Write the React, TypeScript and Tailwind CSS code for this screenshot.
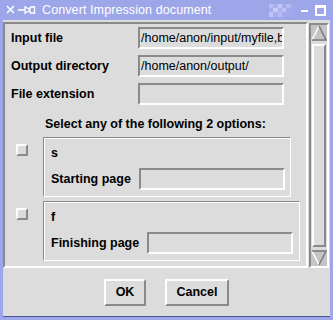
import React from 'react';

const font = { fontFamily: '"Liberation Sans", Arial, sans-serif' };

// sunken entry
const Field = ({ value, className = '' }: { value?: string; className?: string }) => (
    <div className={`h-[22px] border-2 border-t-[#8a8a8a] border-l-[#8a8a8a] border-r-white border-b-white bg-[#dcdcdc] overflow-hidden whitespace-nowrap text-[12.5px] leading-[18px] pl-[1px] text-black ${className}`}>
        {value}
    </div>
);

const Check = () => (
    <div className="w-[12px] h-[12px] shrink-0 border-2 border-t-white border-l-white border-r-[#8a8a8a] border-b-[#8a8a8a] bg-[#dcdcdc]" />
);

const Arrow = ({ down }: { down?: boolean }) => (
    <div className="h-[16px] w-full bg-[#c4c4c4] flex items-center justify-center">
        <svg width="16" height="16" viewBox="0 0 16 16">
            {down ? (
                <>
                    <path d="M1 1 L8 15" stroke="#ffffff" strokeWidth="1.5" fill="none" />
                    <path d="M8 15 L15 1 L1 1" stroke="#7a7a7a" strokeWidth="1.5" fill="none" />
                </>
            ) : (
                <>
                    <path d="M1 15 L8 1" stroke="#ffffff" strokeWidth="1.5" fill="none" />
                    <path d="M8 1 L15 15 L1 15" stroke="#7a7a7a" strokeWidth="1.5" fill="none" />
                </>
            )}
        </svg>
    </div>
);

const Option = ({ name, label, width, right }: { name: string; label: string; width: string; right: string }) => (
    <div className="flex items-start pl-[11px]">
        <div className="mt-[7px]">
            <Check />
        </div>
        <div className={`ml-[15px] h-[60px] ${width} border border-t-[#8a8a8a] border-l-[#8a8a8a] border-r-white border-b-white shadow-[inset_1px_1px_0_#ffffff] pl-[7px] ${right} pt-[7px] flex flex-col`}>
            <div className="text-[12.5px] font-bold leading-[16px] h-[16px]">{name}</div>
            <div className="flex items-center gap-[8px] mt-[7px]">
                <span className="text-[12.5px] font-bold whitespace-nowrap">{label}</span>
                <Field className="flex-1" />
            </div>
        </div>
    </div>
);

export default function App() {
    return (
        <div className="w-[333px] h-[320px] bg-[#9ea6ea] flex flex-col overflow-hidden" style={font}>
            {/* title bar */}
            <div className="h-[20px] flex items-center text-white relative">
                <svg width="40" height="20" viewBox="0 0 40 20" className="shrink-0">
                    <path d="M7 6 L14 13 M14 6 L7 13" stroke="#ffffff" strokeWidth="1.6" />
                    <path d="M18 10 L25 10" stroke="#ffffff" strokeWidth="1.6" />
                    <path d="M25 6 L25 14 M25 7 L30 9.5 L30 10.5 L25 13 M30 7 L30 13 M30 7 L35 7 M30 13 L35 13 M34.5 6 L34.5 14" stroke="#ffffff" strokeWidth="1.3" fill="none" />
                </svg>
                <span className="ml-[2px] text-[12.5px] tracking-[0.1px] leading-[20px]">Convert Impression document</span>
                <div className="ml-auto flex items-center h-full">
                    <div className="grid grid-cols-6 grid-rows-3 w-[26px] h-[13px] mr-[6px]">
                        {['#b8bef2', '#a8aeee', '#c4c8f4', '#a4abee', '#b4baf0', '#a0a8ec',
                          '#a4abee', '#c8ccf6', '#aab0ee', '#bcc2f2', '#a6acee', '#a0a8ec',
                          '#c0c6f4', '#a8aeee', '#b6bcf2', '#a4aaee', '#a2a9ec', '#a0a8ec'].map((c, i) => (
                            <div key={i} style={{ background: c }} />
                        ))}
                    </div>
                    <div className="w-[7px] h-[2px] bg-white mr-[7px] mt-[1px]" />
                    <div className="w-[11px] h-[11px] border-2 border-white border-t-[3px] mr-[7px]" />
                </div>
            </div>

            {/* window body */}
            <div className="flex-1 mx-[3px] bg-[#dcdcdc] border-b border-[#4d5494] flex flex-col mb-[3px] text-black">
                <div className="flex mt-[2px]">
                    {/* scrolled panel */}
                    <div className="w-[305px] h-[246px] border-2 border-t-[#8a8a8a] border-l-[#8a8a8a] border-r-white border-b-white overflow-hidden">
                        <div className="grid grid-cols-[127px_146px] gap-y-[6px] pl-[6px] pt-[3px] items-center">
                            <span className="text-[12.5px] font-bold">Input file</span>
                            <Field value="/home/anon/input/myfile,bak" />
                            <span className="text-[12.5px] font-bold">Output directory</span>
                            <Field value="/home/anon/output/" />
                            <span className="text-[12.5px] font-bold">File extension</span>
                            <Field />
                        </div>
                        <div className="pl-[40px] mt-[11px] text-[12.5px] font-bold leading-[16px]">
                            Select any of the following 2 options:
                        </div>
                        <div className="flex flex-col gap-[4px] mt-[5px]">
                            <Option name="s" label="Starting page" width="w-[248px]" right="pr-[5px]" />
                            <Option name="f" label="Finishing page" width="w-[257px]" right="pr-[6px]" />
                        </div>
                    </div>

                    {/* scrollbar */}
                    <div className="ml-[1px] mt-[1px] w-[20px] h-[245px] border-2 border-t-[#8a8a8a] border-l-[#8a8a8a] border-r-white border-b-white flex flex-col bg-[#dcdcdc]">
                        <Arrow />
                        <div className="flex-1 mx-[1px] my-[3px] border-2 border-t-white border-l-white border-r-[#8a8a8a] border-b-[#8a8a8a]" />
                        <Arrow down />
                    </div>
                </div>

                {/* buttons */}
                <div className="flex justify-center gap-[19px] mt-[11px]">
                    <button className="w-[42px] h-[27px] border-2 border-t-white border-l-white border-r-[#8a8a8a] border-b-[#8a8a8a] text-[12.5px] font-bold bg-[#dcdcdc]">
                        OK
                    </button>
                    <button className="w-[64px] h-[27px] border-2 border-t-white border-l-white border-r-[#8a8a8a] border-b-[#8a8a8a] text-[12.5px] font-bold bg-[#dcdcdc]">
                        Cancel
                    </button>
                </div>
            </div>
        </div>
    );
}
